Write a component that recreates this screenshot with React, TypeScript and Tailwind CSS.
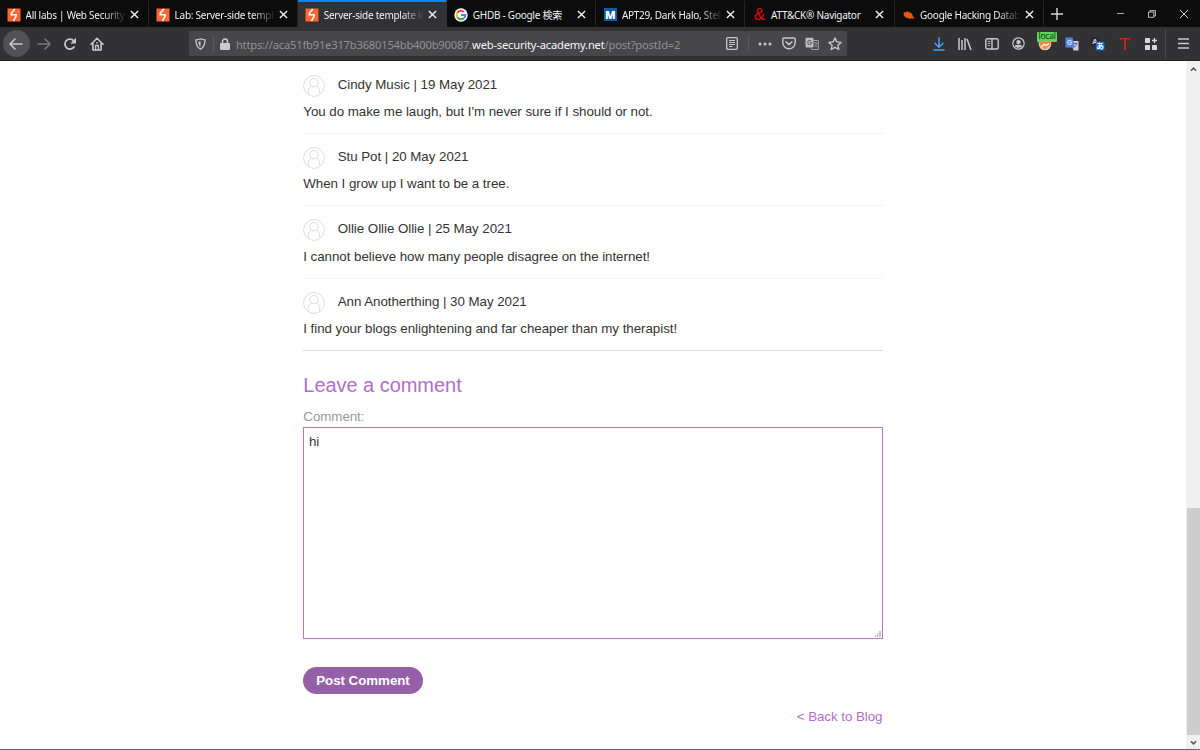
import { useState } from "react";
import type { ReactNode } from "react";
import clsx from "clsx";

type Tab = {
  title: string;
  icon: ReactNode;
  active?: boolean;
  faded?: boolean;
};

type BlogComment = {
  author: string;
  date: string;
  body: string;
};

// Long titles are cut to what fits a tab, the end fades out
const tabs: Tab[] = [
  { title: "All labs | Web Security", icon: <BurpIcon />, faded: true },
  { title: "Lab: Server-side templ", icon: <BurpIcon />, faded: true },
  { title: "Server-side template in", icon: <BurpIcon />, active: true, faded: true },
  { title: "GHDB - Google 検索", icon: <GoogleIcon /> },
  { title: "APT29, Dark Halo, Stell", icon: <MitreIcon />, faded: true },
  { title: "ATT&CK® Navigator", icon: <AmpersandIcon /> },
  { title: "Google Hacking Datab", icon: <ExploitIcon />, faded: true }
];

const comments: BlogComment[] = [
  {
    author: "Cindy Music",
    date: "19 May 2021",
    body: "You do make me laugh, but I'm never sure if I should or not."
  },
  { author: "Stu Pot", date: "20 May 2021", body: "When I grow up I want to be a tree." },
  {
    author: "Ollie Ollie Ollie",
    date: "25 May 2021",
    body: "I cannot believe how many people disagree on the internet!"
  },
  {
    author: "Ann Anotherthing",
    date: "30 May 2021",
    body: "I find your blogs enlightening and far cheaper than my therapist!"
  }
];

export default function App() {
  return (
    <div className="flex h-[750px] w-[1200px] flex-col overflow-hidden border-b border-[#666] bg-white">
      <TabBar />
      <Toolbar />
      <div className="flex min-h-0 flex-1">
        <BlogPage />
        <Scrollbar />
      </div>
    </div>
  );
}

function TabBar() {
  return (
    <div className="flex h-[27px] shrink-0 bg-[#0c0c0d] font-['Noto_Sans','Noto_Sans_CJK_JP',sans-serif]">
      {tabs.map((tab, i) => (
        <div
          key={i}
          className={clsx(
            "flex w-[149.1px] shrink-0 items-center border-t-2 border-r pl-[7px]",
            tab.active ? "border-t-[#0a84ff] border-r-[#323234] bg-[#323234]" : "border-t-transparent border-r-[#252526]"
          )}
        >
          <span className="flex h-[14px] w-[14px] shrink-0 items-center justify-center">{tab.icon}</span>
          <span
            className={clsx(
              "ml-[4.5px] w-[99px] text-[10px] leading-[16px] tracking-[-0.26px] whitespace-nowrap text-[#f0f0f1]",
              tab.faded && "[mask-image:linear-gradient(to_right,black_78%,transparent_102%)]"
            )}
          >
            {tab.title}
          </span>
          <button type="button" aria-label="Close tab" className="ml-[2px] flex h-4 w-4 items-center justify-center">
            <svg viewBox="0 0 10 10" className="h-[9px] w-[9px]" stroke="#f4f4f5" strokeWidth="1.5">
              <path d="M1 1l8 8M9 1l-8 8" />
            </svg>
          </button>
        </div>
      ))}
      <button type="button" aria-label="New tab" className="flex w-[27px] items-center justify-center">
        <svg viewBox="0 0 12 12" className="h-[12px] w-[12px]" stroke="#d6d6d7" strokeWidth="1.4">
          <path d="M6 0v12M0 6h12" />
        </svg>
      </button>
      <div className="ml-auto flex text-[#e4e4e5]">
        <span className="flex w-8 items-center justify-center">
          <span className="h-px w-[7px] bg-[#aaa]" />
        </span>
        <span className="flex w-8 items-center justify-center">
          <svg viewBox="0 0 8 8" className="h-2 w-2" fill="none" stroke="currentColor" strokeWidth="0.8">
            <path d="M.5 2h5.3v5.3H.5zM2 2V.6h5.4V6H6" />
          </svg>
        </span>
        <span className="flex w-8 items-center justify-center">
          <svg viewBox="0 0 8 8" className="h-2 w-2" stroke="currentColor" strokeWidth="0.9">
            <path d="M0 0l8 8M8 0L0 8" />
          </svg>
        </span>
      </div>
    </div>
  );
}

function Toolbar() {
  return (
    <div className="flex h-[34px] shrink-0 items-center border-b border-[#242426] bg-[#323234] pl-[3px] text-[#c9c9ca]">
      <Slot>
        <span className="flex h-[27px] w-[27px] shrink-0 items-center justify-center rounded-full bg-[#525254]">
          <ArrowIcon />
        </span>
      </Slot>
      <Slot className="pl-[2px] text-[#77777a]">
        <span className="rotate-180">
          <ArrowIcon />
        </span>
      </Slot>
      <Slot className="pl-[2px]">
        <svg viewBox="0 0 14 14" className="h-[14px] w-[14px]" fill="none" stroke="currentColor" strokeWidth="1.8">
          <path d="M11.4 9.3A5 5 0 1 1 10.7 3.8" />
          <path d="M13 .8v5.7H7.3z" fill="currentColor" stroke="none" />
        </svg>
      </Slot>
      <Slot className="pl-[2px]">
        <svg viewBox="0 0 14 14" className="h-[14px] w-[14px]" fill="none" stroke="currentColor" strokeWidth="1.6" strokeLinejoin="round" strokeLinecap="round">
          <path d="M1 7.2L7 1.3l6 5.9M2.9 6.5V13h8.2V6.5" />
          <path d="M5.6 13V8.5h2.8V13" strokeWidth="1.3" />
          <circle cx="7" cy="5.9" r=".8" fill="currentColor" stroke="none" />
        </svg>
      </Slot>
      <AddressBar />
      <div className="ml-[78.5px] flex items-center">
        <Slot>
          <svg viewBox="0 0 12 14" className="h-[14px] w-[12px]" fill="none" stroke="#4d9ff0" strokeWidth="1.5" strokeLinecap="round" strokeLinejoin="round">
            <path d="M6 1v9M2 6.3l4 4 4-4M1 13h10" />
          </svg>
        </Slot>
        <Slot>
          <svg viewBox="0 0 14 12" className="h-[12px] w-[14px]" fill="none" stroke="currentColor" strokeWidth="1.5">
            <path d="M1 0v12M4 2v10M7 0v12M9 1l4 11" />
          </svg>
        </Slot>
        <Slot>
          <svg viewBox="0 0 14 12" className="h-[12px] w-[14px]" fill="none" stroke="currentColor" strokeWidth="1.4">
            <rect x=".8" y=".8" width="12.4" height="10.2" rx="1.8" />
            <path d="M7 1v10" />
            <path d="M2.7 3.5h2.7M2.7 5.5h2.7M2.7 7.5h2" strokeWidth=".9" />
          </svg>
        </Slot>
        <Slot>
          <svg viewBox="0 0 14 14" className="h-[13px] w-[13px]" fill="none" stroke="currentColor">
            <circle cx="7" cy="7" r="6.1" strokeWidth="1.3" />
            <circle cx="7" cy="5.5" r="2.4" fill="currentColor" stroke="none" />
            <path d="M2.8 9.2c2.2-1.1 6.2-1.1 8.4 0-1 3.2-7.4 3.2-8.4 0z" fill="currentColor" stroke="none" />
          </svg>
        </Slot>
        <Slot>
          <span className="relative flex h-[14px] w-[14px]">
            <svg viewBox="0 0 14 14" className="h-[14px] w-[14px]">
              <circle cx="7" cy="7" r="6.3" fill="#d6cfc8" />
              <path d="M1.8 3.5c2 2 8.500 2 10.500 0l.2 4.500L7 12.500 1.500 8z" fill="#ef8d32" />
              <path d="M3.5 9.500l3-2.300L8 8.500l3-1.800" fill="none" stroke="#fff" strokeWidth="1.2" />
            </svg>
            <span className="absolute -top-[5px] -left-[1px] flex h-[10px] w-[20px] items-center justify-center rounded-[1px] bg-[#61d45d] pb-px font-['Open_Sans',sans-serif] text-[8.5px] leading-none font-medium tracking-[-0.2px] text-[#15260f]">
              local
            </span>
          </span>
        </Slot>
        <Slot>
          <svg viewBox="0 0 14 14" className="h-[14px] w-[14px] font-['Liberation_Sans',sans-serif]">
            <path d="M6 4h7.5v9.5H8.5z" fill="#ced0d4" />
            <path d="M8.8 6.5H12.5M10.5 5.5v1M11.8 6.5c-.5 2-1.500 3-2.500 3.800" fill="none" stroke="#62666d" strokeWidth=".9" />
            <path d="M.5 .5h7l2.500 10H.5z" fill="#4d87ed" />
            <text x="2" y="8" fontSize="6.5" fontWeight="700" fill="#dce8ff">
              G
            </text>
          </svg>
        </Slot>
        <Slot>
          <svg viewBox="0 0 14 14" className="h-[14px] w-[14px] overflow-visible">
            <rect x="0" y="0" width="8" height="8" rx="1" fill="#262628" />
            <text x="1" y="7" fontSize="8" fontWeight="700" fill="#d8d8d8" className="font-['Liberation_Sans',sans-serif]">
              A
            </text>
            <rect x="4.8" y="4.8" width="8.7" height="8.7" rx="1.2" fill="#116de4" />
            <text x="5.3" y="12.2" fontSize="7.7" fontWeight="700" fill="#fff" className="font-['Noto_Sans_CJK_JP',sans-serif]">
              あ
            </text>
          </svg>
        </Slot>
        <Slot>
          <svg viewBox="0 0 12 14" className="h-[14px] w-[12px]" fill="#c02c1a">
            <path d="M.8 1h10.4v2.6h-.6l-.5-1.400H6.900v10l1 .8H4.100l1-.8v-10H1.900l-.5 1.400H.8z" />
          </svg>
        </Slot>
        <Slot>
          <svg viewBox="0 0 12 12" className="h-[12px] w-[12px]" fill="#d7d7d8">
            <rect x="0" y="0" width="5" height="5" rx=".7" />
            <rect x="0" y="7" width="5" height="5" rx=".7" />
            <rect x="7" y="7" width="5" height="5" rx=".7" />
            <path d="M8.8 0h1.4v1.8H12v1.4h-1.800V5H8.800V3.200H7V1.800h1.800z" />
          </svg>
        </Slot>
      </div>
      <span className="ml-[0.5px] h-[28px] w-px bg-[#4b4b4d]" />
      <button type="button" aria-label="Menu" className="ml-[1px] flex w-[34px] items-center justify-center">
        <svg viewBox="0 0 11 11" className="h-[11px] w-[11px]" stroke="currentColor" strokeWidth="1.3">
          <path d="M0 1h11M0 5.5h11M0 10h11" />
        </svg>
      </button>
    </div>
  );
}

function Slot({ children, className }: { children: ReactNode; className?: string }) {
  return <span className={clsx("flex w-[26.6px] shrink-0 items-center justify-center", className)}>{children}</span>;
}

function AddressBar() {
  return (
    <div className="ml-[79.5px] flex h-[25px] w-[658px] shrink-0 items-center rounded-[2px] bg-[#474749]">
      <span className="flex w-[24px] shrink-0 justify-center">
        <svg viewBox="0 0 12 13" className="h-[12px] w-[11px]" fill="none" stroke="currentColor" strokeWidth="1.4">
          <path d="M6 .8c1.7 1 3.3 1.2 5 1.3 0 5-1.3 8-5 10-3.7-2-5-5-5-10 1.7-.1 3.3-.3 5-1.3z" />
          <path d="M6 3.2v6.2C4.4 8 3.7 6.5 3.600 4c.9-.2 1.700-.4 2.400-.8z" fill="currentColor" stroke="none" />
        </svg>
      </span>
      <span className="h-[17px] w-px bg-[#59595b]" />
      <svg viewBox="0 0 10 12" className="ml-[6px] h-[12px] w-[10px] shrink-0">
        <path d="M2.5 6V3.5a2.5 2.5 0 0 1 5 0V6" fill="none" stroke="currentColor" strokeWidth="1.5" />
        <rect x="0" y="5" width="10" height="7" rx="1" fill="currentColor" />
      </svg>
      <span className="mt-[3px] ml-[6px] w-[480px] shrink-0 font-['Noto_Sans',sans-serif] text-[11.2px] tracking-[-0.21px] whitespace-nowrap text-[#929294]">
        https://aca51fb91e317b3680154bb400b90087.
        <span className="text-[#f5f5f6]">web-security-academy.net</span>
        /post?postId=2
      </span>
      <span className="flex w-[32px] shrink-0 justify-center">
        <svg viewBox="0 0 12 13" className="h-[13px] w-[12px]" fill="none" stroke="currentColor" strokeWidth="1.3">
          <rect x=".7" y=".7" width="10.6" height="11.6" rx="1.3" />
          <path d="M3 3.5h6M3 5.5h6M3 7.5h6M3 9.5h3.500" strokeWidth="1" />
        </svg>
      </span>
      <span className="h-[17px] w-px bg-[#59595b]" />
      <span className="flex w-[32.5px] shrink-0 justify-center">
        <svg viewBox="0 0 14 4" className="h-[4px] w-[14px]" fill="currentColor">
          <circle cx="2" cy="2" r="1.5" />
          <circle cx="7" cy="2" r="1.5" />
          <circle cx="12" cy="2" r="1.5" />
        </svg>
      </span>
      <span className="flex w-[15px] shrink-0 justify-center">
        <svg viewBox="0 0 14 13" className="h-[13px] w-[14px]" fill="none" stroke="currentColor" strokeWidth="1.4" strokeLinecap="round" strokeLinejoin="round">
          <path d="M2 1h10q1.2 0 1.2 1.2v3.3a6.2 6.2 0 0 1-12.4 0V2.2Q.8 1 2 1z" />
          <path d="M4 4.7l3 2.9 3-2.9" strokeWidth="1.5" />
        </svg>
      </span>
      <span className="ml-[8.5px] flex w-[14px] shrink-0 justify-center">
        <svg viewBox="0 0 14 14" className="h-[14px] w-[14px] font-['Liberation_Sans',sans-serif]">
          <rect x=".5" y=".8" width="8" height="9.7" rx="1" fill="#bdbdbe" />
          <path d="M8.5 3.5h4.8v9H7l-1-2" fill="none" stroke="#a4a4a6" strokeWidth="1" />
          <path d="M9 6h3.5M10.7 5v1M12 6c-.4 2-1.5 3.3-2.7 4M9.7 7.5c.5 1 1.4 2 2.3 2.5" fill="none" stroke="#a4a4a6" strokeWidth=".8" />
          <text x="2" y="8" fontSize="6.5" fontWeight="700" fill="#5b5b5d">
            G
          </text>
        </svg>
      </span>
      <svg viewBox="0 0 14 14" className="ml-[9px] h-[14px] w-[14px] shrink-0" fill="none" stroke="currentColor" strokeWidth="1.4" strokeLinejoin="round">
        <path d="M7 1l1.8 3.9 4.3.5-3.2 2.9.9 4.2L7 10.4l-3.8 2.1.9-4.2L.9 5.4l4.3-.5z" />
      </svg>
    </div>
  );
}

function BlogPage() {
  const [text, setText] = useState("hi");

  return (
    <main className="min-w-0 flex-1 pt-[0.5px] font-['Liberation_Sans',Arial,sans-serif] text-[13.33px] leading-[18px] tracking-[-0.04px] text-[#333332]">
      <div className="ml-[303px] w-[579.5px]">
        {comments.map((comment, i) => (
          <section
            key={comment.author}
            className={clsx(
              "h-[72.4px] border-b pt-[13px]",
              i === comments.length - 1 ? "border-[#dedede]" : "border-[#f3f3f3]"
            )}
          >
            <div className="flex h-[22px] items-center">
              <AvatarIcon />
              <p className="-mt-[2px] ml-[12.7px]">
                {comment.author} | {comment.date}
              </p>
            </div>
            <p className="mt-[6.4px] pl-[0.3px]">{comment.body}</p>
          </section>
        ))}
        <h2 className="mt-[20.5px] pl-[0.3px] text-[20px] leading-[26px] text-[#b06fc9]">Leave a comment</h2>
        <form onSubmit={(e) => e.preventDefault()}>
          <label htmlFor="comment" className="mt-[10px] block pl-[0.3px] text-[#999]">
            Comment:
          </label>
          <div className="relative mt-[1px] h-[212px]">
            <textarea
              id="comment"
              value={text}
              onChange={(e) => setText(e.target.value)}
              className="block h-full w-full resize-none border border-[#b574cd] bg-white px-[5px] py-[5px] text-[#333332] outline-none"
            />
            <svg viewBox="0 0 6 6" className="absolute right-[2px] bottom-[2px] h-[6px] w-[6px]" fill="#c4c4c4">
              <path d="M4 0h2v6H4zM2 2h1.5v4H2zM0 4h1.5v2H0z" />
            </svg>
          </div>
          <button
            type="submit"
            className="mt-[28px] block h-[27px] w-[120px] rounded-full bg-[#9560a8] pt-[1px] text-[13.33px] font-bold text-white"
          >
            Post Comment
          </button>
        </form>
        <p className="mt-[14px] text-right">
          <a href="#blog" className="text-[#b06fc9]">
            &lt; Back to Blog
          </a>
        </p>
      </div>
    </main>
  );
}

function Scrollbar() {
  return (
    <div className="flex w-[14px] flex-col items-center bg-[#f0f0f0] text-[#555]">
      <svg viewBox="0 0 8 5" className="mt-[6px] h-[5px] w-[7px]" fill="none" stroke="currentColor" strokeWidth="1.8">
        <path d="M1 4l3-3 3 3" />
      </svg>
      <span className="mt-[436px] h-[227px] w-[13px] bg-[#cdcdcd]" />
      <svg viewBox="0 0 8 5" className="mt-[5px] h-[5px] w-[7px]" fill="none" stroke="currentColor" strokeWidth="1.8">
        <path d="M1 1l3 3 3-3" />
      </svg>
    </div>
  );
}

function AvatarIcon() {
  return (
    <svg viewBox="0 0 22 22" className="h-[22px] w-[22px] shrink-0" fill="none" stroke="#dadedc" strokeWidth="1">
      <circle cx="11" cy="11" r="10.4" />
      <circle cx="11" cy="7.7" r="4.2" />
      <path d="M5.3 19.5V16c0-2.5 1.5-4 3.3-5M16.7 19.5V16c0-2.5-1.5-4-3.3-5" />
    </svg>
  );
}

function ArrowIcon() {
  return (
    <svg viewBox="0 0 14 12" className="h-[12px] w-[14px]" fill="none" stroke="currentColor" strokeWidth="1.6" strokeLinecap="round" strokeLinejoin="round">
      <path d="M13 6H1M6 1L1 6l5 5" />
    </svg>
  );
}

function BurpIcon() {
  return (
    <svg viewBox="0 0 14 14" className="h-[14px] w-[14px]">
      <rect x=".5" y=".5" width="13" height="13" fill="#ff6633" />
      <path d="M7.8 1L4.300 5.300v1.500h4.900v1L6.500 13" fill="none" stroke="#fff" strokeWidth="1.6" />
    </svg>
  );
}

function GoogleIcon() {
  return (
    <svg viewBox="0 0 14 14" className="h-[14px] w-[14px]">
      <circle cx="7" cy="7" r="6.7" fill="#fff" />
      <g fill="none" strokeWidth="2">
        <path d="M3.3 4.7A4.3 4.3 0 0 1 10 3.9" stroke="#ea4335" />
        <path d="M3.3 4.7a4.3 4.3 0 0 0 0 4.6" stroke="#fbbc05" />
        <path d="M3.3 9.3A4.3 4.3 0 0 0 9.8 10.3" stroke="#34a853" />
        <path d="M7 7h4.3a4.3 4.3 0 0 1-1.5 3.3" stroke="#4285f4" />
      </g>
    </svg>
  );
}

function MitreIcon() {
  return (
    <span className="flex h-[13px] w-[13px] items-center justify-center bg-[#0c5aa6] font-['Open_Sans',sans-serif] text-[11px] leading-none font-extrabold text-white">
      M
    </span>
  );
}

function AmpersandIcon() {
  return <span className="font-['Liberation_Sans',sans-serif] text-[17px] leading-[14px] text-[#e00b0b]">&amp;</span>;
}

function ExploitIcon() {
  return (
    <svg viewBox="0 0 14 14" className="h-[14px] w-[14px]">
      <path d="M1.5 4l1.8.4L5 3.2l1.4 1 2 .3 2 2 .3 1.5 2 2-1.5-.2.6 1.2-2.5-.7-1.3.6-2-.9-1.6-.1L3 8.5 1.5 8l.8-1.5L1 5.3l1 .1z" fill="#e8590c" />
    </svg>
  );
}
